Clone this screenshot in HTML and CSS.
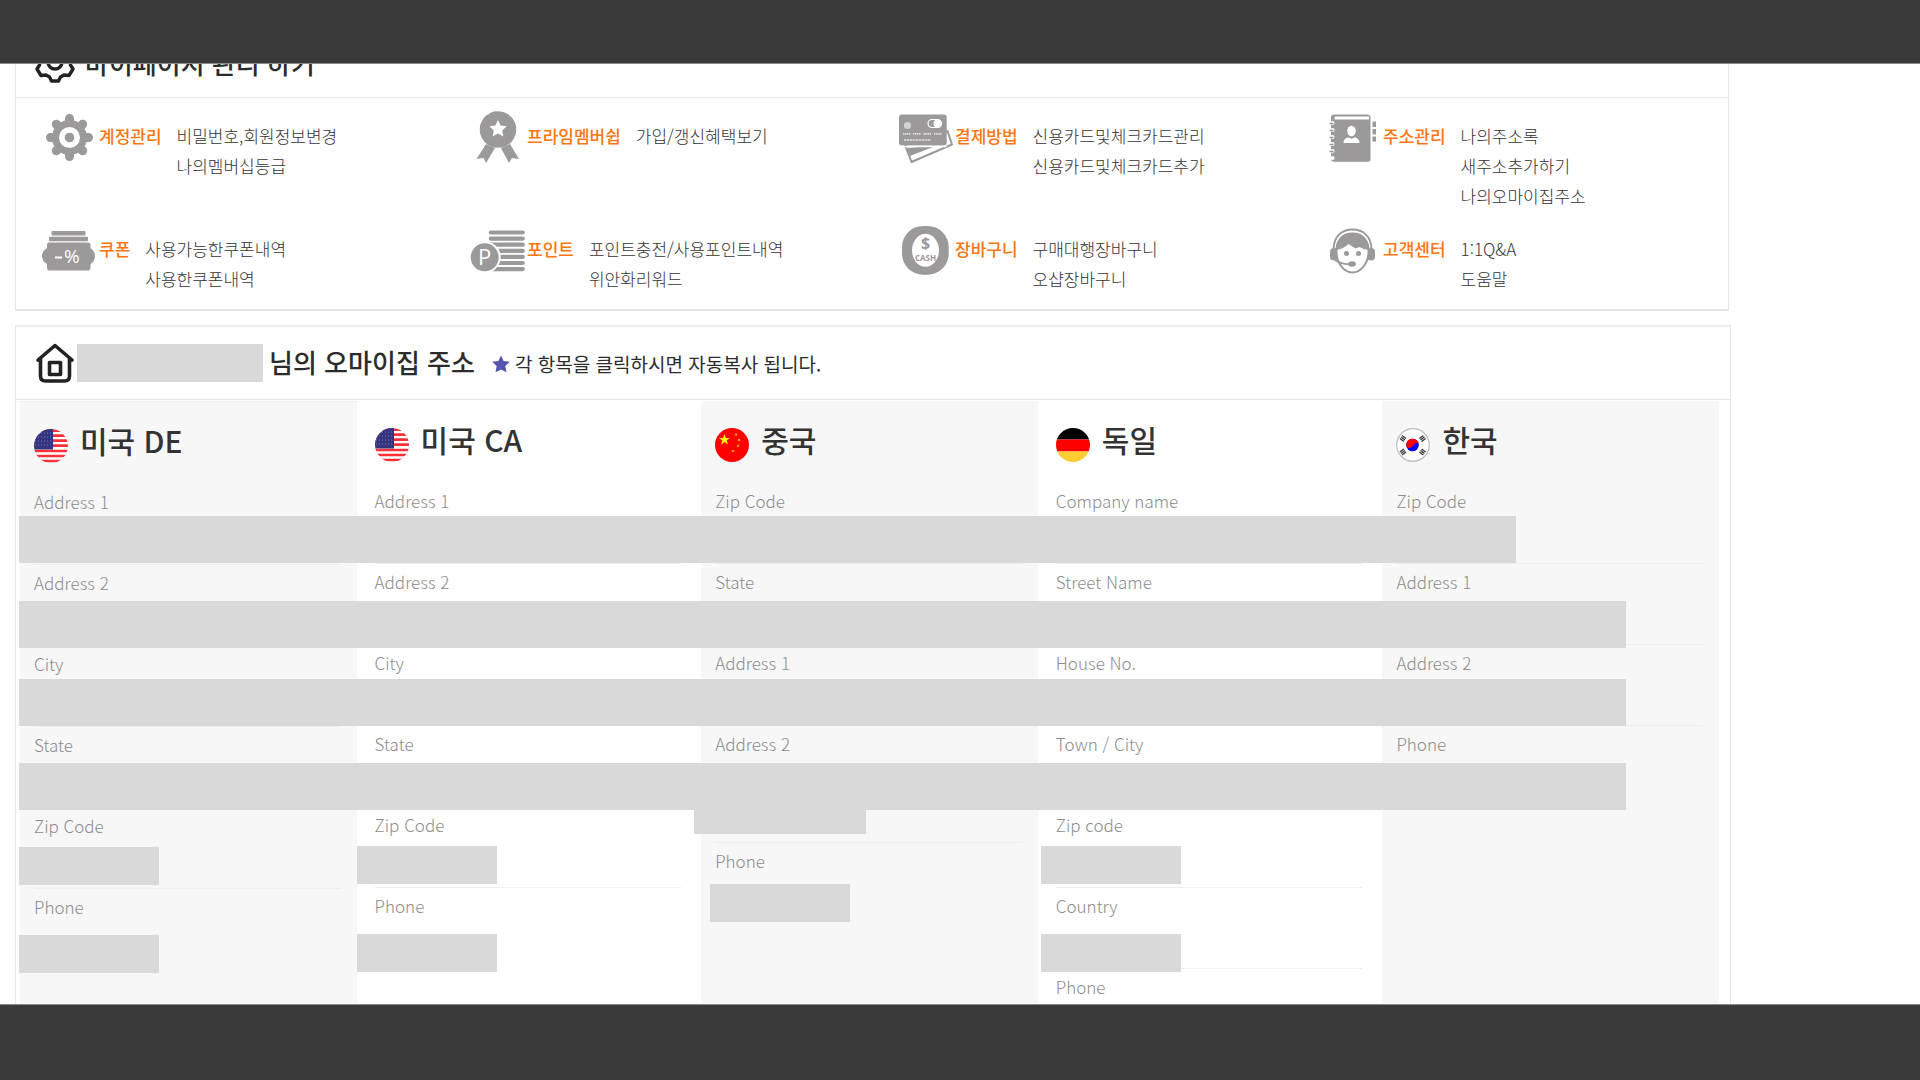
FILE: index.html
```html
<!DOCTYPE html>
<html lang="ko">
<head>
<meta charset="utf-8">
<meta name="viewport" content="width=device-width, initial-scale=1">
<title>마이페이지</title>
<link rel="stylesheet" href="styles.css">
</head>
<body>
<header class="bar bar-top"></header>
<main class="view">
  <section class="panel panel-menu">
    <h1 class="panel-head panel-head-menu">
      <svg class="head-icon" viewBox="0 0 40 40" fill="none" stroke="#222" stroke-width="3.4" stroke-linejoin="round">
        <path d="M16.500 2h7l2 4.500 3.500 1.500 5-1.500 4 6.500-2.500 4v5l2.500 4-4 6.500-5-.5-3.500 2-2 4h-7l-2-4-3.500-2-5 .5-4-6.500 2.500-4v-5l-2.500-4 4-6.500 5 1.500 3.500-1.500z"/>
        <circle cx="20" cy="19" r="7"/>
      </svg>
      <span>마이페이지 관리 하기</span>
    </h1>
    <ul class="menu">
      <li class="item">
        <svg class="icon" viewBox="0 0 56 56" fill="#9b9999">
          <g stroke="#9b9999" stroke-width="9" stroke-linecap="round"><path d="M28.500 9.500v38M9.500 28.500h38M15.300 15.300l26.400 26.400M41.700 15.300L15.300 41.700"/></g>
          <circle cx="28.500" cy="28.500" r="17.500"/><circle cx="28.500" cy="28.500" r="10.500" fill="#fff"/><circle cx="28.500" cy="28.500" r="4.800"/>
        </svg>
        <h2 class="item-title">계정관리</h2>
        <div class="links"><a href="#">비밀번호,회원정보변경</a><a href="#">나의멤버십등급</a></div>
      </li>
      <li class="item">
        <svg class="icon" viewBox="0 0 56 56" fill="#9b9999">
          <path d="M17 35l9 4-9 15-2.500-5-7 1zM41 35l-9 4 8 15 3-5 7 1z"/>
          <circle cx="29" cy="20.500" r="15.800"/>
          <circle cx="29" cy="20.500" r="15.800" fill="none" stroke="#9b9999" stroke-width="5" stroke-dasharray="5.600 2.670" stroke-linecap="round"/>
          <path d="M29 11l2.600 5.600 6.100.7-4.500 4.200 1.200 6-5.400-3-5.400 3 1.200-6-4.500-4.200 6.100-.7z" fill="#fff"/>
        </svg>
        <h2 class="item-title">프라임멤버쉽</h2>
        <div class="links"><a href="#">가입/갱신혜택보기</a></div>
      </li>
      <li class="item">
        <svg class="icon" viewBox="0 0 56 56" fill="#9b9999">
          <path d="M8 36l6.500 17L55 35.500 50.500 22z" fill="#fff" stroke="#9b9999" stroke-width="2" stroke-linejoin="round"/>
          <path d="M9.500 39l3.500 8L40 36.500z"/>
          <rect x="2" y="5.500" width="47.700" height="31" rx="3"/>
          <path d="M2 37.500h47.500" stroke="#fff" stroke-width="1.500"/>
          <circle cx="10.500" cy="16.500" r="3.600" fill="#d4d3d3"/>
          <rect x="31" y="10.500" width="13.500" height="8" rx="4" fill="none" stroke="#fff" stroke-width="1.200"/><circle cx="40.500" cy="14.500" r="4" fill="#fff"/>
          <path d="M6 24.800h8M16 24.800h8M26.500 24.800h8M37 24.800h8" stroke="#ddd" stroke-width="1.800" stroke-dasharray="1.500 .5"/>
          <path d="M7 31h27" stroke="#ddd" stroke-width="1.500" stroke-dasharray="2.500 .5"/>
        </svg>
        <h2 class="item-title">결제방법</h2>
        <div class="links"><a href="#">신용카드및체크카드관리</a><a href="#">신용카드및체크카드추가</a></div>
      </li>
      <li class="item">
        <svg class="icon" viewBox="0 0 56 56" fill="#9b9999">
          <path d="M9 5.500h34q2.500.5 2.500 3v41.500q0 2.700-2.700 2.700H9q-3 0-3-3V8.500q0-3 3-3z"/>
          <path d="M10 7.500h34v3H10q-1.500-1.500 0-3z" fill="#fff"/>
          <path d="M7.500 14v36" stroke="#fff" stroke-width="4.200" stroke-linecap="round" stroke-dasharray="0 7"/>
          <path d="M4.500 14.500h4M4.500 21.500h4M4.500 28.500h4M4.500 35.500h4M4.500 42.500h4" stroke="#9b9999" stroke-width="1.500"/>
          <rect x="47.500" y="12.500" width="3.500" height="5.500"/><rect x="47.500" y="20" width="3.500" height="5.500"/><rect x="47.500" y="27.500" width="3.500" height="5"/>
          <ellipse cx="26.500" cy="22" rx="4.300" ry="5.200" fill="#fff"/><path d="M18.500 34q0-5 5-5.500l3 1.200 3-1.200q5 .5 5 5.500z" fill="#fff"/>
        </svg>
        <h2 class="item-title">주소관리</h2>
        <div class="links"><a href="#">나의주소록</a><a href="#">새주소추가하기</a><a href="#">나의오마이집주소</a></div>
      </li>
      <li class="item">
        <svg class="icon" viewBox="0 0 56 56" fill="#9b9999">
          <rect x="10.500" y="9" width="34" height="4.500" rx="1"/><rect x="8" y="14.700" width="39" height="4.500" rx="1"/>
          <path d="M8 20.500h39q2.500 0 2.500 3V26q4.500 3 4.500 8t-4.500 8v3.500q0 3-2.500 3H8q-2 0-2-3V42q-5-3-5-8t5-8v-2.500q0-3 2-3z"/>
          <path d="M14 35.500h7" stroke="#fff" stroke-width="2"/>
          <text class="glyph" x="23" y="41">%</text>
        </svg>
        <h2 class="item-title">쿠폰</h2>
        <div class="links"><a href="#">사용가능한쿠폰내역</a><a href="#">사용한쿠폰내역</a></div>
      </li>
      <li class="item">
        <svg class="icon" viewBox="0 0 56 56" fill="#9b9999">
          <path d="M21.800 10.500h32M21.800 16.600h32M21.800 22.700h32M21.800 28.800h32M21.800 34.900h32M21.800 41h32M21.800 47.100h32" stroke="#9b9999" stroke-width="4.200" stroke-linecap="round"/>
          <circle cx="15.700" cy="35.300" r="15" stroke="#fff" stroke-width="2"/>
          <text class="glyph glyph-big" x="9" y="43">P</text>
        </svg>
        <h2 class="item-title">포인트</h2>
        <div class="links"><a href="#">포인트충전/사용포인트내역</a><a href="#">위안화리워드</a></div>
      </li>
      <li class="item">
        <svg class="icon" viewBox="0 0 56 56" fill="#9b9999">
          <rect x="5" y="4" width="46.700" height="48.700" rx="21"/>
          <ellipse cx="28.500" cy="28.300" rx="13.500" ry="16.500" fill="#fff"/>
          <text class="dollar" x="28.500" y="27">$</text>
          <text class="cash" x="28.500" y="39">CASH</text>
        </svg>
        <h2 class="item-title">장바구니</h2>
        <div class="links"><a href="#">구매대행장바구니</a><a href="#">오샵장바구니</a></div>
      </li>
      <li class="item">
        <svg class="icon" viewBox="0 0 56 56" fill="#9b9999">
          <path d="M8.500 27C9 14 17 7.500 27.500 7.500S46 14 46.500 27" fill="none" stroke="#9b9999" stroke-width="2"/>
          <rect x="5" y="26" width="8" height="12.500" rx="4"/><rect x="42" y="26" width="8" height="12.500" rx="4"/>
          <path d="M11.500 30C11 19 17 11.500 27.500 11.500S44 19 43.500 30c0 10-7 20.500-16 20.500S11.500 40 11.500 30z" fill="#fff" stroke="#9b9999" stroke-width="2"/>
          <path d="M11 28C11 17 18 11 27.500 11S44 17 44 28q-6-.5-9.500-3l-4 1.500-7-4.500q-5 5-12.500 6z"/>
          <circle cx="21.500" cy="31.500" r="2.500"/><circle cx="33.500" cy="31.500" r="2.500"/>
          <path d="M10 38q6 4.500 17 4.500" fill="none" stroke="#9b9999" stroke-width="1.600"/><ellipse cx="27" cy="42" rx="4" ry="2.700"/>
        </svg>
        <h2 class="item-title">고객센터</h2>
        <div class="links"><a href="#">1:1Q&amp;A</a><a href="#">도움말</a></div>
      </li>
    </ul>
  </section>

  <section class="panel panel-address">
    <div class="panel-head">
      <svg class="head-icon" viewBox="0 0 40 40" fill="none" stroke="#222" stroke-width="3.600" stroke-linejoin="round" stroke-linecap="round">
        <path d="M3 17L20 2.500 37 17M5.500 15.500V33q0 5 5 5h19q5 0 5-5V15.500"/><path d="M14.500 19.500h11v12h-11z"/>
      </svg>
      <span class="mask-name"></span>
      <h2 class="owner">님의 오마이집 주소</h2>
      <svg class="star" viewBox="0 0 18 18" fill="#5555b0"><path d="M9 .5l2.600 5.600 6.200.7-4.500 4.200 1.200 6.300L9 14.400l-5.500 2.900L4.700 11 .2 6.800l6.200-.7z"/></svg>
      <p class="notice">각 항목을 클릭하시면 자동복사 됩니다.</p>
    </div>
    <div class="countries">
      <article class="country shaded lined">
        <h3 class="country-head">
          <svg class="flag" viewBox="0 0 34 34"><defs><clipPath id="round"><circle cx="17" cy="17" r="17"/></clipPath></defs>
            <g id="us" clip-path="url(#round)"><path fill="#fff" d="M0 0h34v34H0z"/><path d="M0 1.700h34M0 6.700h34M0 11.700h34M0 16.700h34M0 22h34M0 27h34M0 32h34" stroke="#ff3038" stroke-width="2.700"/><path fill="#35357f" d="M0 0h19v20.500H0z"/><path d="M1 4h18M1 8h18M1 12h18M1 16h18" stroke="#7777ad" stroke-width="1" stroke-dasharray="1 2"/></g></svg>
          <span>미국 DE</span></h3>
        <dl class="fields"><dt>Address 1</dt><dt>Address 2</dt><dt>City</dt><dt>State</dt><dt>Zip Code</dt><dt>Phone</dt></dl>
        <span class="mask mask-first upper"></span><span class="mask mask-first lower"></span>
      </article>
      <article class="country">
        <h3 class="country-head"><svg class="flag" viewBox="0 0 34 34"><use href="#us"/></svg><span>미국 CA</span></h3>
        <dl class="fields"><dt>Address 1</dt><dt>Address 2</dt><dt>City</dt><dt>State</dt><dt>Zip Code</dt><dt>Phone</dt></dl>
        <span class="mask mask-second upper"></span><span class="mask mask-second lower"></span>
      </article>
      <article class="country shaded">
        <h3 class="country-head"><svg class="flag" viewBox="0 0 34 34"><circle cx="17" cy="17" r="17" fill="#f00"/><path fill="#ff0" d="M9.500 6l1.400 3.900H15l-3.300 2.500 1.200 4-3.400-2.400-3.400 2.400 1.200-4L4 9.900h4.100z"/><g fill="#ff9a00"><circle cx="21" cy="6.500" r="1.300"/><circle cx="24" cy="12" r="1.300"/><circle cx="23" cy="18" r="1.300"/><circle cx="18" cy="23" r="1.300"/></g></svg><span>중국</span></h3>
        <dl class="fields"><dt>Zip Code</dt><dt>State</dt><dt>Address 1</dt><dt class="tall">Address 2</dt><dt>Phone</dt></dl>
        <span class="mask mask-extra"></span><span class="mask mask-third"></span>
      </article>
      <article class="country">
        <h3 class="country-head"><svg class="flag" viewBox="0 0 34 34"><g clip-path="url(#round)"><path d="M0 0h34v11.500H0z"/><path fill="#f00" d="M0 11.500h34v12H0z"/><path fill="#fc3" d="M0 23.500h34V34H0z"/></g></svg><span>독일</span></h3>
        <dl class="fields"><dt>Company name</dt><dt>Street Name</dt><dt>House No.</dt><dt>Town / City</dt><dt>Zip code</dt><dt>Country</dt><dt>Phone</dt></dl>
        <span class="mask mask-fourth upper"></span><span class="mask mask-fourth lower"></span>
      </article>
      <article class="country shaded">
        <h3 class="country-head"><svg class="flag" viewBox="0 0 34 34"><circle cx="17" cy="17" r="16.300" fill="#fff" stroke="#bbb" stroke-width="1.200"/><circle cx="16.500" cy="17" r="6.300" fill="#00f"/><path fill="#f00" d="M10.400 18.500a6.300 6.300 0 1 1 12.300-3c-2.500-1-4.500 0-5.500 1.800-1.700 3-5 3.400-6.800 1.200z"/><g stroke="#333" stroke-width="5" stroke-dasharray="1.300 .6"><path d="M5.500 12.500l3-4M28 12.500l-3-4M5.500 22l3 4M28 22l-3 4"/></g></svg><span>한국</span></h3>
        <dl class="fields"><dt>Zip Code</dt><dt>Address 1</dt><dt>Address 2</dt><dt>Phone</dt></dl>
      </article>
      <span class="mask-row row-one"></span><span class="mask-row row-two"></span><span class="mask-row row-three"></span><span class="mask-row row-four"></span>
    </div>
  </section>
</main>
<footer class="bar bar-bottom"></footer>
</body>
</html>
```
FILE: styles.css
```css
* { box-sizing: border-box; margin: 0; padding: 0; }
body {
  display: flex;
  flex-direction: column;
  height: 100vh;
  overflow: hidden;
  background: #fff;
  color: #333;
  font-family: "Noto Sans CJK KR", "Noto Sans", sans-serif;
  font-size: 17px;
  line-height: 30px;
}
.bar { flex: none; background: #3a3a3a; }
.bar-top { height: 64px; border-bottom: 1px solid #8a8a8a; }
.bar-bottom { height: 76px; border-top: 1px solid #8a8a8a; }

.view {
  flex: 1;
  display: flex;
  flex-direction: column;
  gap: 14px;
  min-height: 0;
  overflow: hidden;
  padding: 0 189px 0 15px;
}
.panel { flex: none; border: 1px solid #e6e6e6; }
.panel-menu { margin: -41px 2px 0 0; border-bottom: 2px solid #e2e2e2; }
.panel-address { flex: 1 0 auto; border-top: 2px solid #eee; border-bottom: 0; }
.panel-head {
  display: flex;
  align-items: center;
  height: 73px;
  padding-left: 19px;
  border-bottom: 1px solid #e6e6e6;
  font-size: 26px;
  font-weight: 500;
  color: #2b2b2b;
  white-space: nowrap;
}
.panel-head-menu { gap: 10px; height: 74px; padding-top: 4px; }
.head-icon { flex: none; width: 40px; height: 40px; }
.mask-name { width: 186px; height: 38px; margin: 0 6px 0 2px; background: #d9d9d9; }
.owner { padding-bottom: 2px; font-size: 26px; font-weight: 500; }
.star { width: 18px; height: 18px; margin: 2px 5px 0 17px; }
.notice { padding-top: 2px; font-size: 19px; font-weight: 400; }

.menu {
  display: grid;
  grid-template-columns: repeat(4, 1fr);
  grid-template-rows: 113px 87px;
  padding-top: 11px;
  list-style: none;
}
.item { display: flex; align-items: flex-start; padding-left: 25px; white-space: nowrap; }
.icon { flex: none; width: 56px; height: 56px; margin-right: 2px; }
.item-title { margin: 12px 15px 0 0; font-size: 17px; font-weight: 500; color: #ff7510; }
.links { display: flex; flex-direction: column; padding-top: 12px; }
.links a { color: #333; font-weight: 300; text-decoration: none; }
.glyph { font: 500 19px "Open Sans", sans-serif; fill: #fff; }
.glyph-big { font-size: 22px; }
.dollar { font: 700 16px/16px "Open Sans", sans-serif; text-anchor: middle; }
.cash { font: 700 8px/8px "Open Sans", sans-serif; text-anchor: middle; }

.countries {
  position: relative;
  display: grid;
  grid-template-columns: repeat(5, 1fr);
  gap: 4px;
  height: 100%;
  padding: 1px 11px 0 4px;
}
.country { position: relative; padding: 0 16px 0 14px; }
.shaded { background: #f7f7f7; }
.lined { border-top: 1px solid #f0f0f0; }
.country-head {
  display: flex;
  align-items: flex-start;
  gap: 12px;
  height: 82px;
  padding-top: 23px;
  font-size: 30px;
  font-weight: 500;
  white-space: nowrap;
}
.flag { width: 34px; height: 34px; margin-top: 4px; }
.fields dt {
  height: 81px;
  padding-top: 3px;
  border-bottom: 1px solid #eee;
  color: #8c8c8c;
  font-weight: 300;
}
.fields .tall { height: 117px; }
.fields dt:last-child { border-bottom: 0; }

.mask { position: absolute; width: 140px; height: 38px; background: #d9d9d9; }
.upper { top: 445px; }
.lower { top: 533px; }
.mask-first { left: -1px; }
.mask-second { left: -4px; }
.mask-third { left: 9px; top: 483px; }
.mask-fourth { left: -1px; }
.mask-extra { left: -7px; top: 409px; width: 172px; height: 24px; }
.mask-row { position: absolute; left: 3px; right: 104px; height: 47px; background: #d9d9d9; }
.row-one { top: 116px; right: 214px; }
.row-two { top: 201px; }
.row-three { top: 279px; }
.row-four { top: 363px; }
```
